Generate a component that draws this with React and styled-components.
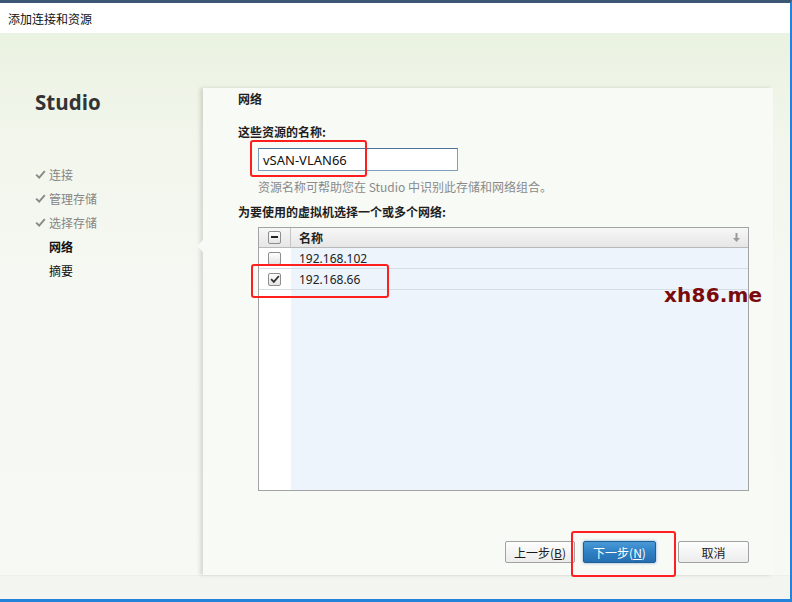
import React from "react";
import styled, { createGlobalStyle } from "styled-components";

const GlobalStyle = createGlobalStyle`
  html, body {
    margin: 0;
    padding: 0;
    background: #ffffff;
  }
  body {
    font-family: "Noto Sans", "Noto Sans CJK SC", sans-serif;
    font-size: 12px;
    color: #1e1e1e;
  }
`;

const Window = styled.div`
  position: relative;
  width: 792px;
  height: 602px;
  box-sizing: border-box;
  border-top: 3px solid #3d5874;
  border-right: 2px solid #2382d9;
  border-bottom: 3px solid #2382d9;
  display: flex;
  flex-direction: column;
  overflow: hidden;
`;

const TitleBar = styled.div`
  height: 30px;
  flex: none;
  display: flex;
  align-items: center;
  padding-left: 8px;
  background: #ffffff;
  font-family: "Noto Sans CJK SC", sans-serif;
  font-size: 12px;
  color: #111;
`;

const Body = styled.div`
  flex: 1;
  display: flex;
  flex-direction: column;
  background: linear-gradient(180deg, #eaf2e1 0px, #f2f6ec 110px, #f6f8f3 260px, #f7f9f5 100%);
`;

const Upper = styled.div`
  flex: 1;
  display: flex;
`;

const Sidebar = styled.div`
  width: 203px;
  flex: none;
  box-sizing: border-box;
  padding: 57px 0 0 35px;
`;

const Brand = styled.div`
  font-family: "Open Sans", "Noto Sans", sans-serif;
  font-weight: 700;
  font-size: 20.5px;
  line-height: 24px;
  color: #333;
`;

const Steps = styled.ul`
  list-style: none;
  margin: 48px 0 0;
  padding: 0;
`;

const Step = styled.li`
  height: 24px;
  display: flex;
  align-items: center;
  font-family: "Noto Sans CJK SC", sans-serif;
  font-size: 12px;
  color: ${(p) => (p.$done ? "#858585" : "#111")};
  font-weight: ${(p) => (p.$current ? 700 : 400)};
`;

const StepMark = styled.span`
  width: 14px;
  flex: none;
  display: flex;
  align-items: center;
`;

const Panel = styled.div`
  position: relative;
  flex: 1;
  margin: 55px 17px 0 0;
  padding: 3px 0 0 35px;
  background: #f8faf6;
  box-shadow: -3px 0 4px rgba(0, 0, 0, 0.13);
  font-family: "Noto Sans CJK SC", sans-serif;
`;

const Pointer = styled.div`
  position: absolute;
  left: -6px;
  top: 152px;
  width: 0;
  height: 0;
  border-top: 6px solid transparent;
  border-bottom: 6px solid transparent;
  border-right: 6px solid #f8faf6;
`;

const Heading = styled.div`
  font-weight: 700;
  font-size: 12px;
  line-height: 16px;
  color: #1e1e1e;
`;

const Label = styled.div`
  font-weight: 700;
  font-size: 12px;
  line-height: 16px;
  margin-top: ${(p) => p.$mt}px;
  color: #1e1e1e;
`;

const Indented = styled.div`
  margin-left: 20px;
`;

const NameInput = styled.div`
  width: 200px;
  height: 23px;
  box-sizing: border-box;
  margin-top: 8px;
  border: 1px solid #7f9dbd;
  border-top-color: #4d7399;
  background: #ffffff;
  display: flex;
  align-items: center;
  padding-left: 4px;
  font-family: "Noto Sans", sans-serif;
  font-size: 13px;
  color: #111;
`;

const Hint = styled.div`
  margin-top: 8px;
  font-size: 12px;
  line-height: 16px;
  color: #8a8a8a;
`;

const Table = styled.div`
  margin-top: 7px;
  width: 491px;
  height: 264px;
  box-sizing: border-box;
  border: 1px solid #a3a3a3;
  display: flex;
  flex-direction: column;
  background: linear-gradient(90deg, #ffffff 0, #ffffff 32px, #edf4fc 32px, #edf4fc 100%);
`;

const HeaderRow = styled.div`
  height: 19px;
  flex: none;
  display: flex;
  background: linear-gradient(180deg, #f7f7f7 0%, #e6e6e6 100%);
  border-bottom: 1px solid #b9b9b9;
`;

const Row = styled.div`
  height: 20px;
  flex: none;
  display: flex;
  border-bottom: 1px solid #d6dde6;
`;

const CheckCell = styled.div`
  width: 32px;
  flex: none;
  box-sizing: border-box;
  display: flex;
  align-items: center;
  padding-left: 9px;
  border-right: ${(p) => (p.$head ? "1px solid #c4c4c4" : "none")};
  background: ${(p) => (p.$head ? "transparent" : "#ffffff")};
`;

const NameCell = styled.div`
  flex: 1;
  display: flex;
  align-items: center;
  padding: 0 8px;
  font-family: ${(p) => (p.$head ? '"Noto Sans CJK SC", sans-serif' : '"Noto Sans", sans-serif')};
  font-weight: ${(p) => (p.$head ? 700 : 400)};
  font-size: 12px;
  color: #222;
`;

const SortArrow = styled.span`
  margin-left: auto;
  display: flex;
  align-items: center;
`;

const Box = styled.span`
  width: 13px;
  height: 13px;
  box-sizing: border-box;
  border: 1px solid #8e8e8e;
  border-radius: 2px;
  background: linear-gradient(180deg, #ffffff 0%, #e4e4e4 100%);
  display: flex;
  align-items: center;
  justify-content: center;
`;

const Footer = styled.div`
  height: 23px;
  flex: none;
  background: #f3f6f0;
  border-top: 1px solid #eef1ea;
`;

const ButtonBar = styled.div`
  display: flex;
  justify-content: flex-end;
  width: 511px;
  margin-top: 50px;
`;

const Button = styled.button`
  height: 22px;
  width: ${(p) => p.$w}px;
  margin-left: ${(p) => p.$ml}px;
  box-sizing: border-box;
  padding: 0;
  border-radius: 2px;
  font-family: "Noto Sans CJK SC", sans-serif;
  font-size: 12px;
  border: 1px solid ${(p) => (p.$primary ? "#1f5f97" : "#a2a2a2")};
  color: ${(p) => (p.$primary ? "#ffffff" : "#1a1a1a")};
  background: ${(p) =>
    p.$primary
      ? "linear-gradient(180deg, #4a9ad6 0%, #2f80c4 50%, #256fb0 100%)"
      : "linear-gradient(180deg, #fdfdfd 0%, #ececec 100%)"};
  box-shadow: ${(p) => (p.$primary ? "0 0 3px rgba(40, 110, 170, 0.6)" : "none")};
`;

const Mark = styled.span`
  position: absolute;
  border: 2px solid #ff1f1f;
  border-radius: 3px;
  pointer-events: none;
`;

const Watermark = styled.div`
  position: absolute;
  left: 664px;
  top: 280px;
  font-family: "DejaVu Sans", sans-serif;
  font-weight: 700;
  font-size: 20px;
  letter-spacing: 0.2px;
  color: #7b0b0b;
`;

const Check = ({ color = "#8a8a8a", size = 11 }) => (
  <svg width={size} height={size} viewBox="0 0 11 11">
    <path d="M1.2 5.6 L4.2 8.6 L9.8 2.2" fill="none" stroke={color} strokeWidth="2" />
  </svg>
);

const steps = [
  { label: "连接", done: true },
  { label: "管理存储", done: true },
  { label: "选择存储", done: true },
  { label: "网络", current: true },
  { label: "摘要" },
];

const networks = [
  { name: "192.168.102", checked: false },
  { name: "192.168.66", checked: true },
];

export default function App() {
  return (
    <Window>
      <GlobalStyle />
      <TitleBar>添加连接和资源</TitleBar>
      <Body>
        <Upper>
          <Sidebar>
            <Brand>Studio</Brand>
            <Steps>
              {steps.map((s) => (
                <Step key={s.label} $done={s.done} $current={s.current}>
                  <StepMark>{s.done && <Check />}</StepMark>
                  {s.label}
                </Step>
              ))}
            </Steps>
          </Sidebar>
          <Panel>
            <Pointer />
            <Heading>网络</Heading>
            <Label $mt={17}>这些资源的名称:</Label>
            <Indented>
              <NameInput>vSAN-VLAN66</NameInput>
              <Hint>资源名称可帮助您在 Studio 中识别此存储和网络组合。</Hint>
            </Indented>
            <Label $mt={9}>为要使用的虚拟机选择一个或多个网络:</Label>
            <Indented>
              <Table>
                <HeaderRow>
                  <CheckCell $head>
                    <Box>
                      <svg width="7" height="3" viewBox="0 0 7 3">
                        <rect x="0" y="0" width="7" height="2" fill="#222" />
                      </svg>
                    </Box>
                  </CheckCell>
                  <NameCell $head>
                    名称
                    <SortArrow>
                      <svg width="7" height="9" viewBox="0 0 7 9">
                        <path d="M2.5 0 H4.5 V5 H7 L3.5 9 L0 5 H2.5 Z" fill="#9a9a9a" />
                      </svg>
                    </SortArrow>
                  </NameCell>
                </HeaderRow>
                {networks.map((n) => (
                  <Row key={n.name}>
                    <CheckCell>
                      <Box>{n.checked && <Check color="#333" size={10} />}</Box>
                    </CheckCell>
                    <NameCell>{n.name}</NameCell>
                  </Row>
                ))}
              </Table>
            </Indented>
            <ButtonBar>
              <Button $w={70}>上一步(<u>B</u>)</Button>
              <Button $w={73} $ml={8} $primary>下一步(<u>N</u>)</Button>
              <Button $w={71} $ml={22}>取消</Button>
            </ButtonBar>
          </Panel>
        </Upper>
        <Footer />
      </Body>
      <Mark style={{ left: 250, top: 137, width: 113, height: 33 }} />
      <Mark style={{ left: 251, top: 261, width: 134, height: 30 }} />
      <Mark style={{ left: 571, top: 528, width: 101, height: 42 }} />
      <Watermark>xh86.me</Watermark>
    </Window>
  );
}
